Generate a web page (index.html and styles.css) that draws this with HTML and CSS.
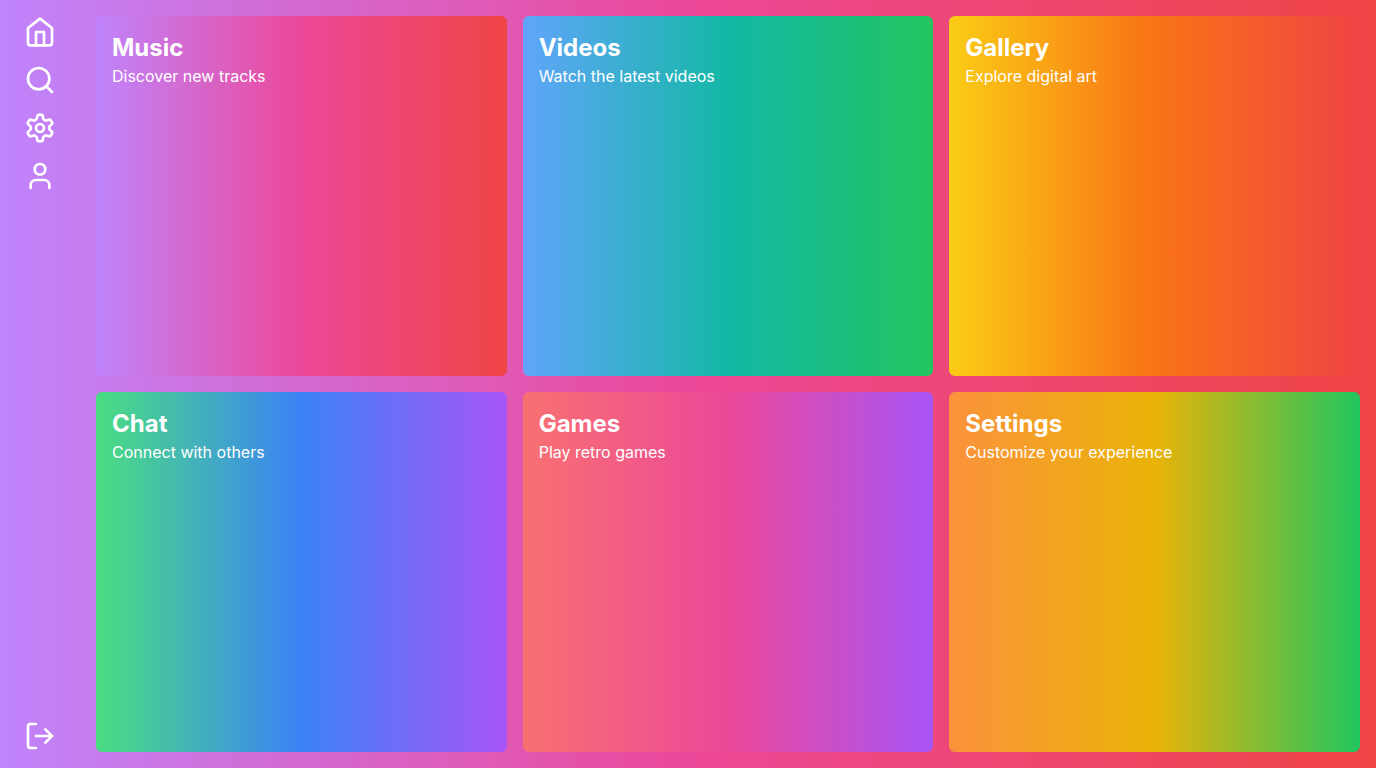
FILE: index.html
```html
<!DOCTYPE html>
<html lang="en">
<head>
  <meta charset="utf-8">
  <meta name="viewport" content="width=device-width, initial-scale=1">
  <title>Dashboard</title>
  <link rel="stylesheet" href="styles.css">
</head>
<body>
  <div class="app">
    <nav class="sidebar" aria-label="Main">
      <div class="nav-group">
        <button class="nav-button" type="button" aria-label="Home">
          <svg class="icon" viewBox="0 0 24 24"><path d="M3 9l9-7 9 7v11a2 2 0 0 1-2 2H5a2 2 0 0 1-2-2z"/><path d="M9 22V12h6v10"/></svg>
        </button>
        <button class="nav-button" type="button" aria-label="Search">
          <svg class="icon" viewBox="0 0 24 24"><circle cx="11" cy="11" r="8"/><path d="M21 21l-4.3-4.3"/></svg>
        </button>
        <button class="nav-button" type="button" aria-label="Settings">
          <svg class="icon" viewBox="0 0 24 24"><path d="M12.22 2h-.44a2 2 0 0 0-2 2v.18a2 2 0 0 1-1 1.73l-.43.25a2 2 0 0 1-2 0l-.15-.08a2 2 0 0 0-2.73.73l-.22.38a2 2 0 0 0 .73 2.73l.15.1a2 2 0 0 1 1 1.72v.51a2 2 0 0 1-1 1.74l-.15.09a2 2 0 0 0-.73 2.73l.22.38a2 2 0 0 0 2.73.73l.15-.08a2 2 0 0 1 2 0l.43.25a2 2 0 0 1 1 1.73V20a2 2 0 0 0 2 2h.44a2 2 0 0 0 2-2v-.18a2 2 0 0 1 1-1.73l.43-.25a2 2 0 0 1 2 0l.15.08a2 2 0 0 0 2.73-.73l.22-.39a2 2 0 0 0-.73-2.73l-.15-.08a2 2 0 0 1-1-1.74v-.5a2 2 0 0 1 1-1.74l.15-.09a2 2 0 0 0 .73-2.73l-.22-.38a2 2 0 0 0-2.73-.73l-.15.08a2 2 0 0 1-2 0l-.43-.25a2 2 0 0 1-1-1.73V4a2 2 0 0 0-2-2z"/><circle cx="12" cy="12" r="3"/></svg>
        </button>
        <button class="nav-button" type="button" aria-label="Profile">
          <svg class="icon" viewBox="0 0 24 24"><path d="M19 21v-2a4 4 0 0 0-4-4H9a4 4 0 0 0-4 4v2"/><circle cx="12" cy="7" r="4"/></svg>
        </button>
      </div>
      <button class="nav-button" type="button" aria-label="Log out">
        <svg class="icon" viewBox="0 0 24 24"><path d="M9 21H5a2 2 0 0 1-2-2V5a2 2 0 0 1 2-2h4"/><path d="M16 17l5-5-5-5"/><path d="M21 12H9"/></svg>
      </button>
    </nav>
    <main class="tiles">
      <section class="tile tile-music"><h2 class="tile-title">Music</h2><p class="tile-text">Discover new tracks</p></section>
      <section class="tile tile-videos"><h2 class="tile-title">Videos</h2><p class="tile-text">Watch the latest videos</p></section>
      <section class="tile tile-gallery"><h2 class="tile-title">Gallery</h2><p class="tile-text">Explore digital art</p></section>
      <section class="tile tile-chat"><h2 class="tile-title">Chat</h2><p class="tile-text">Connect with others</p></section>
      <section class="tile tile-games"><h2 class="tile-title">Games</h2><p class="tile-text">Play retro games</p></section>
      <section class="tile tile-settings"><h2 class="tile-title">Settings</h2><p class="tile-text">Customize your experience</p></section>
    </main>
  </div>
</body>
</html>
```
FILE: styles.css
```css
* {
  box-sizing: border-box;
  margin: 0;
}

body {
  font-family: Inter, "Liberation Sans", sans-serif;
  font-size: 16px;
  line-height: 24px;
  color: #fff;
}

.app {
  display: flex;
  min-height: 100vh;
  background: linear-gradient(to right, #c084fc, #ec4899, #ef4444);
}

.sidebar {
  display: flex;
  flex-direction: column;
  justify-content: space-between;
  align-items: center;
  width: 80px;
  padding: 16px;
}

.nav-group {
  display: flex;
  flex-direction: column;
  gap: 16px;
}

.nav-button {
  display: block;
  padding: 0;
  border: 0;
  background: none;
  color: inherit;
  cursor: pointer;
}

.icon {
  display: block;
  width: 32px;
  height: 32px;
  fill: none;
  stroke: currentColor;
  stroke-width: 2;
  stroke-linecap: round;
  stroke-linejoin: round;
}

.tiles {
  display: grid;
  flex: 1;
  grid-template-columns: repeat(3, 1fr);
  grid-template-rows: repeat(2, 1fr);
  gap: 16px;
  padding: 16px;
}

.tile {
  padding: 16px;
  border-radius: 6px;
}

.tile-title {
  font-size: 24px;
  line-height: 32px;
  font-weight: 700;
}

.tile-text {
  font-weight: 400;
}

.tile-music {
  background: linear-gradient(to right, #c084fc, #ec4899, #ef4444);
}

.tile-videos {
  background: linear-gradient(to right, #60a5fa, #14b8a6, #22c55e);
}

.tile-gallery {
  background: linear-gradient(to right, #facc15, #f97316, #ef4444);
}

.tile-chat {
  background: linear-gradient(to right, #4ade80, #3b82f6, #a855f7);
}

.tile-games {
  background: linear-gradient(to right, #f87171, #ec4899, #a855f7);
}

.tile-settings {
  background: linear-gradient(to right, #fb923c, #eab308, #22c55e);
}
```
